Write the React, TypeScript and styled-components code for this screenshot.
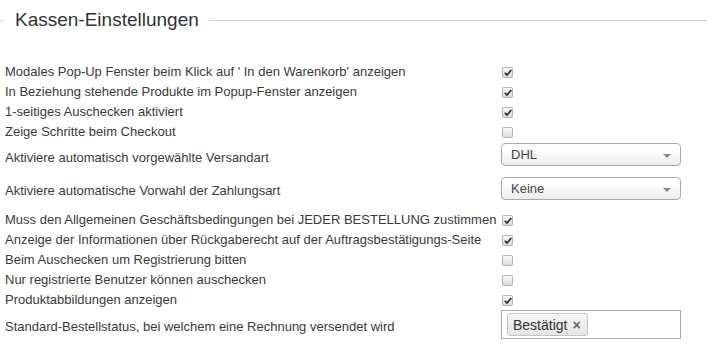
import React from "react";
import styled, { createGlobalStyle } from "styled-components";

const GlobalStyle = createGlobalStyle`
  body {
    margin: 0;
    background: #fff;
    font-family: "Liberation Sans", Arial, sans-serif;
    color: #3a3a3a;
  }
`;

const Page = styled.div`
  width: 707px;
  height: 344px;
  overflow: hidden;
`;

const Header = styled.div`
  display: flex;
  align-items: center;
  height: 40px;
  margin-bottom: 21px;
`;

const Rule = styled.div<{ $grow?: boolean }>`
  height: 1px;
  background: #d0d0d0;
  width: ${(p) => (p.$grow ? "auto" : "4px")};
  flex: ${(p) => (p.$grow ? 1 : "none")};
`;

const Title = styled.h2`
  margin: 0 10px 0 11px;
  font-size: 19px;
  font-weight: normal;
  color: #333;
  line-height: 24px;
`;

const Row = styled.div<{ $h?: number; $mt?: number }>`
  display: flex;
  align-items: center;
  height: ${(p) => p.$h ?? 20}px;
  margin-top: ${(p) => p.$mt ?? 0}px;
`;

const Label = styled.div<{ $shift?: number }>`
  width: 501px;
  flex: none;
  padding-left: 5px;
  box-sizing: border-box;
  font-size: 13px;
  white-space: nowrap;
  position: relative;
  top: ${(p) => p.$shift ?? 0}px;
`;

const Box = styled.span`
  display: inline-flex;
  align-items: center;
  justify-content: center;
  width: 11px;
  height: 11px;
  margin-left: 1px;
  margin-top: 2px;
  border: 1px solid #b4b4b4;
  border-radius: 2px;
  background: linear-gradient(#fafafa, #dcdcdc);
  box-sizing: border-box;
`;

const Select = styled.div`
  display: flex;
  align-items: center;
  justify-content: space-between;
  width: 180px;
  height: 23px;
  padding: 0 9px 0 9px;
  box-sizing: border-box;
  border: 1px solid #aaa;
  border-radius: 4px;
  background: linear-gradient(#fff 20%, #ececec);
  font-size: 13px;
  color: #444;
`;

const Caret = styled.span`
  width: 0;
  height: 0;
  border-left: 4px solid transparent;
  border-right: 4px solid transparent;
  border-top: 4px solid #888;
  margin-top: 2px;
`;

const TagBox = styled.div`
  display: flex;
  align-items: center;
  width: 180px;
  height: 29px;
  padding: 0 5px;
  box-sizing: border-box;
  border: 1px solid #aaa;
  background: #fff;
`;

const Tag = styled.span`
  display: inline-flex;
  align-items: center;
  gap: 5px;
  height: 21px;
  padding: 0 6px 0 5px;
  border: 1px solid #c4c4c4;
  border-radius: 3px;
  background: linear-gradient(#f4f4f4, #e6e6e6);
  font-size: 14px;
  color: #333;
`;

const Remove = styled.span`
  font-size: 14px;
  font-weight: bold;
  color: #666;
`;

const Check = ({ on }: { on?: boolean }) => (
  <Box>
    {on && (
      <svg width="8" height="7" viewBox="0 0 8 7">
        <path d="M0.8 3.8 L3 6 L7.3 1" stroke="#333" strokeWidth="1.8" fill="none" />
      </svg>
    )}
  </Box>
);

const top: [string, boolean][] = [
  ["Modales Pop-Up Fenster beim Klick auf ' In den Warenkorb' anzeigen", true],
  ["In Beziehung stehende Produkte im Popup-Fenster anzeigen", true],
  ["1-seitiges Auschecken aktiviert", true],
  ["Zeige Schritte beim Checkout", false],
];

const bottom: [string, boolean][] = [
  ["Muss den Allgemeinen Geschäftsbedingungen bei JEDER BESTELLUNG zustimmen", true],
  ["Anzeige der Informationen über Rückgaberecht auf der Auftragsbestätigungs-Seite", true],
  ["Beim Auschecken um Registrierung bitten", false],
  ["Nur registrierte Benutzer können auschecken", false],
  ["Produktabbildungen anzeigen", true],
];

export default function App() {
  return (
    <Page>
      <GlobalStyle />
      <Header>
        <Rule />
        <Title>Kassen-Einstellungen</Title>
        <Rule $grow />
      </Header>

      {top.map(([text, on]) => (
        <Row key={text}>
          <Label>{text}</Label>
          <Check on={on} />
        </Row>
      ))}

      <Row $h={23} $mt={2}>
        <Label $shift={3}>Aktiviere automatisch vorgewählte Versandart</Label>
        <Select>
          DHL
          <Caret />
        </Select>
      </Row>
      <Row $h={23} $mt={11}>
        <Label $shift={2}>Aktiviere automatische Vorwahl der Zahlungsart</Label>
        <Select>
          Keine
          <Caret />
        </Select>
      </Row>

      <Row $mt={9}>
        <Label>{bottom[0][0]}</Label>
        <Check on />
      </Row>
      {bottom.slice(1).map(([text, on]) => (
        <Row key={text}>
          <Label>{text}</Label>
          <Check on={on} />
        </Row>
      ))}

      <Row $h={29} $mt={1}>
        <Label $shift={2}>Standard-Bestellstatus, bei welchem eine Rechnung versendet wird</Label>
        <TagBox>
          <Tag>
            Bestätigt <Remove>×</Remove>
          </Tag>
        </TagBox>
      </Row>
    </Page>
  );
}
